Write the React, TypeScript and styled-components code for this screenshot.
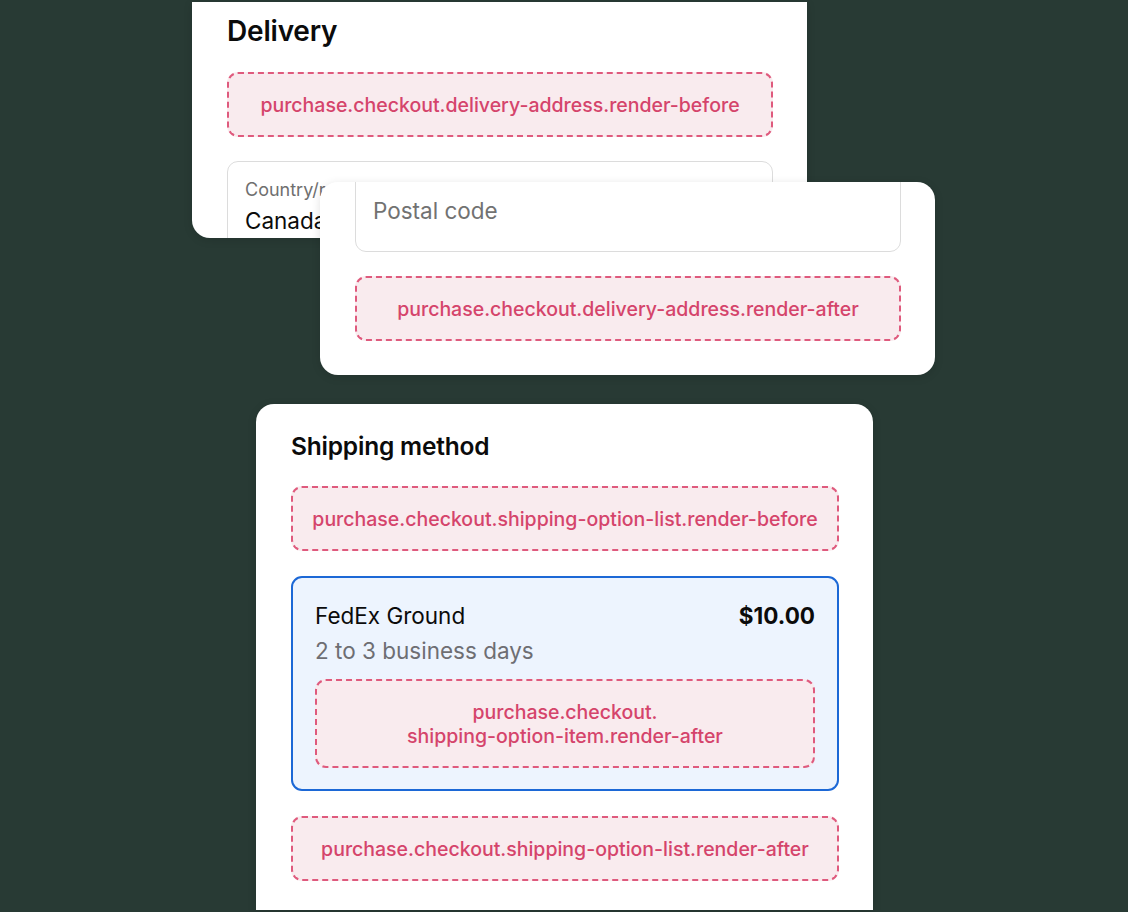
import React from "react";
import styled, { createGlobalStyle } from "styled-components";

const Global = createGlobalStyle`
  html, body { margin: 0; padding: 0; background: #283a34; }
  body { font-family: Inter, "Noto Sans", sans-serif; -webkit-font-smoothing: antialiased; }
`;

const Canvas = styled.div`
  position: relative;
  width: 1128px;
  height: 912px;
  overflow: hidden;
  background: #283a34;
`;

const Card = styled.section<{ $top: number; $left: number; $width: number; $height: number; $radius: string; $pad: string; $gap: number }>`
  position: absolute;
  top: ${(p) => p.$top}px;
  left: ${(p) => p.$left}px;
  width: ${(p) => p.$width}px;
  height: ${(p) => p.$height}px;
  box-sizing: border-box;
  padding: ${(p) => p.$pad};
  background: #ffffff;
  border-radius: ${(p) => p.$radius};
  overflow: hidden;
  display: flex;
  flex-direction: column;
  gap: ${(p) => p.$gap}px;
  box-shadow: 0 2px 10px rgba(0, 0, 0, 0.12);
`;

const Heading = styled.h2<{ $size: number; $lh: number }>`
  margin: 0;
  font-size: ${(p) => p.$size}px;
  line-height: ${(p) => p.$lh}px;
  font-weight: 600;
  color: #0b0b0b;
  letter-spacing: -0.2px;
`;

const Slot = styled.div<{ $height: number }>`
  box-sizing: border-box;
  height: ${(p) => p.$height}px;
  flex-shrink: 0;
  display: flex;
  align-items: center;
  justify-content: center;
  text-align: center;
  background: #f9ebee;
  border: 2px dashed #df5a7d;
  border-radius: 11px;
  color: #d5446b;
  font-size: 19.5px;
  line-height: 24px;
  font-weight: 500;
`;

const Field = styled.div<{ $height: number; $offset?: number }>`
  box-sizing: border-box;
  height: ${(p) => p.$height}px;
  flex-shrink: 0;
  margin-top: ${(p) => p.$offset ?? 0}px;
  border: 1.5px solid #dcdcdc;
  border-radius: 11px;
  padding: 0 17px;
  display: flex;
  flex-direction: column;
  justify-content: center;
`;

const FieldTop = styled(Field)`
  justify-content: flex-start;
  padding-top: 17px;
  gap: 5px;
`;

const FieldLabel = styled.div`
  font-size: 18px;
  line-height: 22px;
  color: #6f6f6f;
`;

const FieldValue = styled.div`
  font-size: 22.5px;
  line-height: 30px;
  color: #0b0b0b;
`;

const Placeholder = styled.div`
  font-size: 22.5px;
  line-height: 30px;
  color: #727272;
`;

const Option = styled.div`
  box-sizing: border-box;
  flex-shrink: 0;
  height: 215px;
  background: #edf4fe;
  border: 2px solid #1c68d6;
  border-radius: 11px;
  padding: 23px 22px 0 22px;
  display: flex;
  flex-direction: column;
`;

const OptionRow = styled.div`
  display: flex;
  justify-content: space-between;
  align-items: center;
  font-size: 22.5px;
  line-height: 30px;
  color: #0b0b0b;
`;

const Price = styled.span`
  font-weight: 700;
`;

const OptionSub = styled.div`
  font-size: 22.5px;
  line-height: 30px;
  color: #6e6e73;
  margin-top: 5px;
  margin-bottom: 13px;
`;

export default function App() {
  return (
    <>
      <Global />
      <Canvas>
        <Card $top={2} $left={192} $width={615} $height={236} $radius="0 0 18px 18px" $pad="12px 34px 0 35px" $gap={24}>
          <Heading $size={28} $lh={34}>Delivery</Heading>
          <Slot $height={65}>purchase.checkout.delivery-address.render-before</Slot>
          <FieldTop $height={110}>
            <FieldLabel>Country/region</FieldLabel>
            <FieldValue>Canada</FieldValue>
          </FieldTop>
        </Card>

        <Card $top={182} $left={320} $width={615} $height={193} $radius="18px" $pad="0 34px 0 35px" $gap={24}>
          <Field $height={82} $offset={-12}>
            <Placeholder>Postal code</Placeholder>
          </Field>
          <Slot $height={65}>purchase.checkout.delivery-address.render-after</Slot>
        </Card>

        <Card $top={404} $left={256} $width={617} $height={506} $radius="18px 18px 0 0" $pad="27px 34px 0 35px" $gap={25}>
          <Heading $size={24.5} $lh={30}>Shipping method</Heading>
          <Slot $height={65}>purchase.checkout.shipping-option-list.render-before</Slot>
          <Option>
            <OptionRow>
              <span>FedEx Ground</span>
              <Price>$10.00</Price>
            </OptionRow>
            <OptionSub>2 to 3 business days</OptionSub>
            <Slot $height={89}>
              purchase.checkout.
              <br />
              shipping-option-item.render-after
            </Slot>
          </Option>
          <Slot $height={65}>purchase.checkout.shipping-option-list.render-after</Slot>
        </Card>
      </Canvas>
    </>
  );
}
